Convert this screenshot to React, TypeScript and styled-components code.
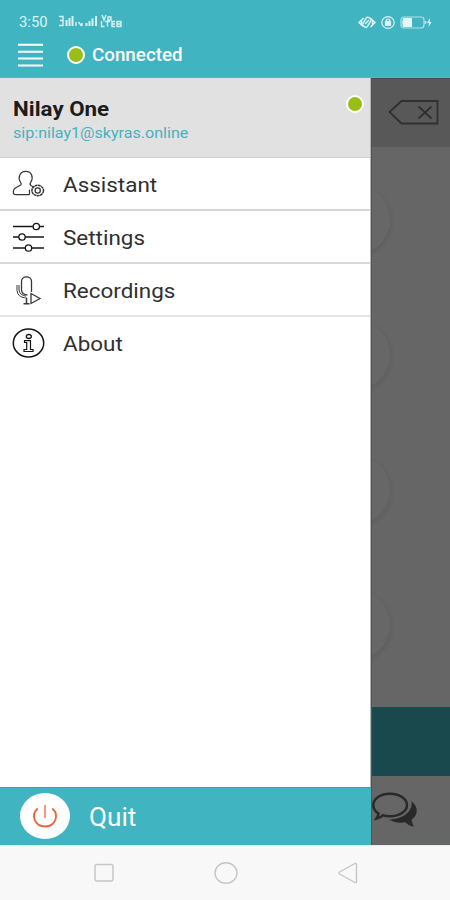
import React from "react";
import styled, { createGlobalStyle } from "styled-components";

const TEAL = "#40b4c0";

const GlobalStyle = createGlobalStyle`
  * { box-sizing: border-box; }
  body { margin: 0; background: #f8f8f8; font-family: Roboto, sans-serif; }
  svg { display: block; flex: none; overflow: visible; }
`;

const Screen = styled.div`
  width: 450px;
  height: 900px;
  display: flex;
  flex-direction: column;
  overflow: hidden;
`;

const Header = styled.header`
  height: 78px;
  flex: none;
  background: ${TEAL};
  color: #fff;
  border-bottom: 1px solid #5cb4be;
`;

const StatusBar = styled.div`
  height: 36px;
  padding: 8px 18px 0 19px;
  display: flex;
  align-items: center;
  justify-content: space-between;
`;

const Cluster = styled.div<{ $gap: number }>`
  display: flex;
  align-items: center;
  gap: ${(p) => p.$gap}px;
`;

const Label = styled.span<{ $size: number; $width: number; $weight?: number; $color?: string; $stretch: number; $drop?: number }>`
  display: block;
  width: ${(p) => p.$width}px;
  padding-top: ${(p) => p.$drop ?? 0}px;
  white-space: nowrap;
  font-size: ${(p) => p.$size}px;
  line-height: 1.2;
  font-weight: ${(p) => p.$weight ?? 400};
  color: ${(p) => p.$color ?? "inherit"};
  transform: scaleX(${(p) => p.$stretch});
  transform-origin: left center;
`;

const TitleBar = styled.div`
  height: 38px;
  padding-left: 18px;
  display: flex;
  align-items: center;
`;

const Dot = styled.i`
  display: block;
  width: 18px;
  height: 18px;
  flex: none;
  border-radius: 50%;
  background: #99be18;
  border: 2.5px solid #fff;
`;

const TitleStatus = styled.div`
  margin-left: 24px;
  display: flex;
  align-items: center;
  gap: 7px;
`;

const Main = styled.main`
  height: 767px;
  flex: none;
  display: flex;
`;

const Drawer = styled.aside`
  width: 371px;
  flex: none;
  display: flex;
  flex-direction: column;
  background: #fff;
  border-right: 1px solid #b2b4b4;
`;

const Account = styled.section`
  height: 80px;
  background: #e1e1e1;
  border-bottom: 1px solid #cfcfcf;
  display: flex;
  justify-content: space-between;
  padding: 17px 6px 0 13px;
`;

const Identity = styled.div`
  display: flex;
  flex-direction: column;
  gap: 2px;
  padding-top: 2px;
`;

const MenuRow = styled.div<{ $line?: string }>`
  height: 53px;
  display: flex;
  align-items: center;
  gap: 18px;
  padding-left: 12px;
  color: #303030;
  border-bottom: 2px solid ${(p) => p.$line ?? "#d9d9d9"};
`;

const QuitBar = styled.div`
  height: 58px;
  margin-top: auto;
  padding: 0 0 1px 20px;
  display: flex;
  align-items: center;
  gap: 19px;
  color: #fff;
  background: ${TEAL};
  border-top: 1px solid #28a9b4;
  margin-right: -1px;
`;

const PowerDisc = styled.div`
  width: 50px;
  height: 46px;
  border-radius: 50%;
  background: #fff;
  display: grid;
  place-items: center;
`;

const Backdrop = styled.section`
  flex: 1;
  display: flex;
  flex-direction: column;
  background: #666;
  border-left: 1px solid #535353;
`;

const NumberField = styled.div`
  height: 69px;
  background: #585858;
  border-top: 1px solid #4c4c4c;
  padding: 20px 0 0 17px;
`;

const Keypad = styled.div`
  height: 560px;
  overflow: hidden;
  display: flex;
  flex-direction: column;
  gap: 65px;
  padding-top: 38px;
`;

const Key = styled.div`
  width: 70px;
  height: 70px;
  flex: none;
  margin-left: -52px;
  border-radius: 50%;
  background: #676767;
  box-shadow: 1px 2px 5px rgba(0, 0, 0, 0.09);
`;

const CallBar = styled.div`
  height: 69px;
  background: #1a494d;
`;

const Tabs = styled.div`
  flex: 1;
  padding-top: 16px;
`;

const SystemNav = styled.nav`
  height: 55px;
  background: #f8f8f8;
  display: flex;
  justify-content: center;
  align-items: center;
  gap: 100px;
  padding-left: 1px;
  border-top: 1px solid #e4eeee;
`;

const Signal = () => (
  <svg width="66" height="13" viewBox="0 0 66 13" fill="none" stroke="#d9f2f5" strokeWidth="1.4">
    <path d="M1 1.500h4v4H2m3 0v5H1" />
    <path d="M8.500 5v6M11.500 3v8M14.500 1v10" strokeWidth="2" />
    <path d="M18 7v4M20.500 7l3 4M24 8v3" />
    <path d="M28.500 8v3M31.500 6v5M34.500 3.500v7.500M38 1v10" strokeWidth="2" />
    <path d="M44 0l2 5 2-5M50 2h3v3h-3zM43.500 6v5.500h3M47 6.500h5M49.500 6.500v5M57 6.500h-3v5h3M54 9h3M59 6.500h4v5h-4zM59 9h4" />
  </svg>
);

const VibrateIcon = () => (
  <svg width="18" height="13" viewBox="0 0 18 13" fill="none" stroke="#e3f6f8" strokeWidth="1.400">
    <rect x="6.300" y="1.300" width="5.400" height="10" rx="1.500" transform="rotate(32 9 6)" />
    <path d="M6 2L3.500 4v5l2 1M3 4.500L1 6.500l2 2M12 2l2.500 2v5l-2 2M15 4.500l2 2-2 2M7 8l4-4" />
  </svg>
);

const LockIcon = () => (
  <svg width="14" height="13" viewBox="0 0 14 13" fill="none" stroke="#d9f2f5" strokeWidth="1.2">
    <ellipse cx="7" cy="6.500" rx="6.200" ry="5.800" />
    <rect x="4.500" y="5.500" width="5" height="3.800" fill="#d9f2f5" />
    <path d="M5.300 5V4q1.700-2 3.400 0v1" />
  </svg>
);

const BatteryIcon = () => (
  <svg width="32" height="13" viewBox="0 0 32 13" fill="none" stroke="#b4e2e8" strokeWidth="1.200">
    <rect x="1" y="1" width="23" height="11" rx="3" />
    <path d="M3 2H12v9H3q-1.500-4.500 0-9z" fill="#e3f6f8" stroke="none" />
    <path d="M25.500 5v3" strokeWidth="1.800" />
    <path d="M30 2l-3 5h2l-.5 4 3-5h-2z" fill="#e3f6f8" stroke="none" />
  </svg>
);

const HamburgerIcon = () => (
  <svg width="25" height="24" viewBox="0 0 25 24" stroke="#fff" strokeWidth="2">
    <path d="M0 1.800h25M0 8.800h25M0 15.500h25M0 22.500h25" />
  </svg>
);

const AssistantIcon = () => (
  <svg width="33" height="30" viewBox="0 0 33 30" fill="none" stroke="#343434" strokeWidth="1.200">
    <path d="M17.500 25.700H4Q1.300 25.700 1.300 23.500q0-3.500 2.500-4.700l4.500-2.500c1.300-.8 1-1.700.2-3C5.500 8.500 7.800 2.300 13.800 2.300s8 6 4.900 11c-1 1.700-.8 2.700.5 3.500l3 1.700" />
    <path d="M17.500 25.700v-5" />
    <ellipse cx="25.700" cy="21.500" rx="5.800" ry="5.200" strokeWidth="1.500" strokeDasharray="2.800 .4" />
    <circle cx="25.700" cy="21.500" r="2.600" strokeWidth="1.300" />
  </svg>
);

const SlidersIcon = () => (
  <svg width="33" height="30" viewBox="0 0 33 30" fill="#fff" stroke="#171717" strokeWidth="1.700">
    <path d="M1 4.500h31M1 15h31M1 26h31" />
    <g strokeWidth="1.300">
      <circle cx="24.300" cy="4.500" r="3.200" />
      <circle cx="10" cy="15" r="3.200" />
      <circle cx="16.500" cy="26" r="3.200" />
    </g>
  </svg>
);

const MicIcon = () => (
  <svg width="33" height="30" viewBox="0 0 33 30" fill="none" stroke="#383838" strokeWidth="1.300">
    <path d="M19.500 17V6.500C19.500.2 9.500.2 9.500 6.500V15q.3 4.500 6 5" />
    <path d="M5 10v5.500q.5 6.500 8.500 7.500M7 10v5q.5 5 7 6.200" strokeWidth="1" />
    <path d="M14.500 22.500v6M11.500 28.700h6" strokeWidth="1.500" />
    <path d="M19 18.500v10l9-5z" />
  </svg>
);

const InfoIcon = () => (
  <svg width="33" height="30" viewBox="0 0 33 30" fill="none" stroke="#171717" strokeWidth="1.500">
    <ellipse cx="16.500" cy="15" rx="15.200" ry="14" />
    <ellipse cx="16.800" cy="8.500" rx="2.500" ry="2" strokeWidth="1.300" />
    <path d="M12.500 12.700h6v8.800h2.500v2H12v-2h2.700v-7h-2.200z" strokeWidth="1.200" />
  </svg>
);

const PowerIcon = () => (
  <svg width="26" height="26" viewBox="0 0 26 26" fill="none" stroke="#ed653d" strokeWidth="1.800">
    <path d="M5.700 5.500C-1.500 12 2.500 23.500 13 23.500S27.500 12 20.300 5.500" />
    <path d="M13 2v13" stroke="#f48d72" />
  </svg>
);

const BackspaceIcon = () => (
  <svg width="50" height="27" viewBox="0 0 50 27" fill="none" stroke="#303030" strokeWidth="1.800">
    <path d="M.5 13L12.500 2H48.500v22.500H12.500z" />
    <path d="M29.500 7.500l13 12M42.500 7.500l-13 12" />
  </svg>
);

const ChatIcon = () => (
  <svg width="46" height="36" viewBox="0 0 46 36">
    <path
      d="M18 1.700C8.500 1.700 1.300 6.500 1.300 13c0 3.500 2 6.500 5.200 8.500-.3 2-1 3.500-2 5 3-.7 5-1.800 6.500-3.200 2 .7 4.500 1 7 1 9.500 0 17-5 17-11.300S27.500 1.700 18 1.700z"
      fill="none"
      stroke="#292929"
      strokeWidth="2.500"
    />
    <path
      d="M39.500 9.200c7.500 5.800 6.500 14.300 0 18.600.4 2.500 1.300 4.500 2.500 7-4-.8-6.800-2.500-8.700-4.500-7 1.200-12.500-.3-16.300-2.800 13.500-.3 24-7.500 22.500-18.300z"
      fill="#292929"
    />
  </svg>
);

const RecentsIcon = () => (
  <svg width="20" height="20" viewBox="0 0 20 20" fill="none" stroke="#c5c5c5" strokeWidth="1.400">
    <rect x="1" y="1.500" width="18" height="16.500" rx="2" />
  </svg>
);

const HomeIcon = () => (
  <svg width="24" height="22" viewBox="0 0 24 22" fill="none" stroke="#c5c5c5" strokeWidth="1.400">
    <ellipse cx="12" cy="11" rx="11" ry="10.300" />
  </svg>
);

const BackIcon = () => (
  <svg width="20" height="22" viewBox="0 0 20 22" fill="none" stroke="#c5c5c5" strokeWidth="1.400" strokeLinejoin="round">
    <path d="M1.500 10q-1 1 0 2L17 20.500q1.500.5 1.500-1v-17q0-1.500-1.500-1z" />
  </svg>
);

const MENU = [
  { text: "Assistant", icon: <AssistantIcon />, line: "#d6d6d6" },
  { text: "Settings", icon: <SlidersIcon />, line: "#d9d9d9" },
  { text: "Recordings", icon: <MicIcon />, line: "#e6e6e6" },
  { text: "About", icon: <InfoIcon />, line: "transparent" },
];

export default function App() {
  return (
    <Screen>
      <GlobalStyle />
      <Header>
        <StatusBar>
          <Cluster $gap={10}>
            <Label $size={14} $width={29} $stretch={1.06} $color="#dcf3f6">3:50</Label>
            <Signal />
          </Cluster>
          <Cluster $gap={5}>
            <VibrateIcon />
            <LockIcon />
            <BatteryIcon />
          </Cluster>
        </StatusBar>
        <TitleBar>
          <HamburgerIcon />
          <TitleStatus>
            <Dot />
            <Label $size={18.5} $width={91} $weight={500} $stretch={1.015} $drop={1}>Connected</Label>
          </TitleStatus>
        </TitleBar>
      </Header>
      <Main>
        <Drawer>
          <Account>
            <Identity>
              <Label $size={20.5} $width={97} $weight={700} $stretch={1.09} $color="#1c1c1c">Nilay One</Label>
              <Label $size={15} $width={176} $stretch={1.072} $color="#45b2bf">sip:nilay1@skyras.online</Label>
            </Identity>
            <Dot />
          </Account>
          {MENU.map((item) => (
            <MenuRow key={item.text} $line={item.line}>
              {item.icon}
              <Label $size={20.5} $width={120} $stretch={1.095} $drop={4}>{item.text}</Label>
            </MenuRow>
          ))}
          <QuitBar>
            <PowerDisc>
              <PowerIcon />
            </PowerDisc>
            <Label $size={25} $width={60} $stretch={1.045} $drop={3}>Quit</Label>
          </QuitBar>
        </Drawer>
        <Backdrop>
          <NumberField>
            <BackspaceIcon />
          </NumberField>
          <Keypad>
            <Key />
            <Key />
            <Key />
            <Key />
          </Keypad>
          <CallBar />
          <Tabs>
            <ChatIcon />
          </Tabs>
        </Backdrop>
      </Main>
      <SystemNav>
        <RecentsIcon />
        <HomeIcon />
        <BackIcon />
      </SystemNav>
    </Screen>
  );
}
